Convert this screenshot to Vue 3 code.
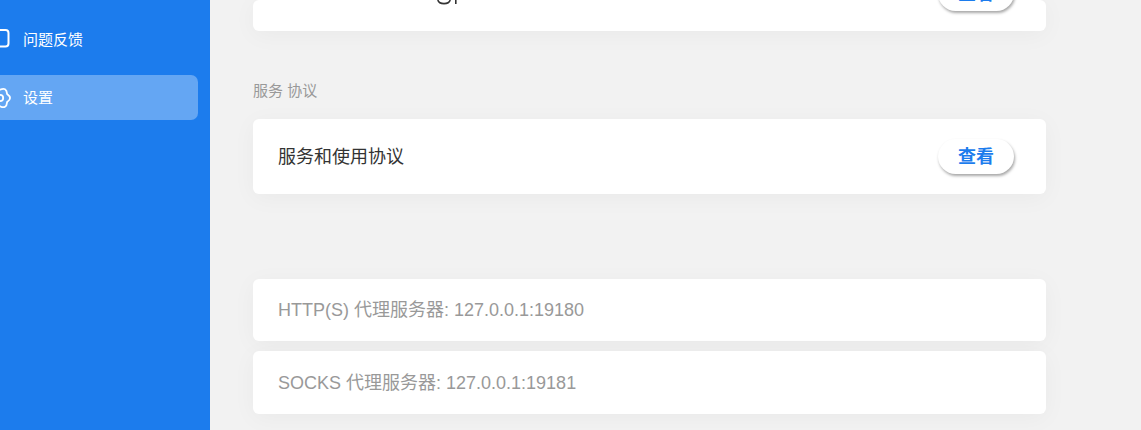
<template>
  <div class="page">
    <aside class="sidebar">
      <div class="nav-list">
        <div v-for="item in navItems" :key="item.name" class="nav-item" :class="{ active: item.active }">
          <svg v-if="item.icon === 'feedback'" class="nav-icon" viewBox="0 0 22 22" fill="none" stroke="#fff" stroke-width="2">
            <rect x="3" y="1" width="16.5" height="16.5" rx="3" />
          </svg>
          <svg v-else class="nav-icon" viewBox="0 0 22 22" fill="none" stroke="#fff" stroke-width="1.8" stroke-linejoin="round">
            <path d="M18.1 6.9Q24 11 18.1 15.1 17.5 22.3 11 19.2 4.5 22.3 3.9 15.1-2 11 3.9 6.9 4.5-.3 11 2.8 17.5-.3 18.1 6.9z" />
            <circle cx="11" cy="11" r="3.2" />
          </svg>
          <span class="nav-label">{{ item.name }}</span>
        </div>
      </div>
    </aside>

    <main class="content">
      <div class="card top-card">
        <svg class="cut-glyph" viewBox="0 0 22 6" fill="none" stroke="#333" stroke-width="1.6">
          <path d="M0.8 0C1.5 2.4 4 3.6 7 3.6S12.5 2.4 13.2 0" />
          <path d="M18.8 0V4" />
        </svg>
        <button class="view-btn"><span class="btn-text">查看</span></button>
      </div>

      <div class="section-title">服务 协议</div>
      <div class="card row-card">
        <span class="row-name">服务和使用协议</span>
        <button class="view-btn"><span class="btn-text">查看</span></button>
      </div>

      <div class="proxy-list">
        <div v-for="proxy in proxies" :key="proxy" class="card proxy-card">
          <span class="proxy-text">{{ proxy }}</span>
        </div>
      </div>
    </main>
  </div>
</template>

<script setup>
const navItems = [
  { name: '问题反馈', icon: 'feedback' },
  { name: '设置', icon: 'settings', active: true }
]

const proxies = [
  'HTTP(S) 代理服务器: 127.0.0.1:19180',
  'SOCKS 代理服务器: 127.0.0.1:19181'
]
</script>

<style>
html, body {
  margin: 0;
  overflow: hidden;
}
</style>

<style scoped>
.page {
  display: flex;
  height: 430px;
  overflow: hidden;
  background-color: #f2f2f2;
  font-family: "Liberation Sans", "Noto Sans CJK SC", sans-serif;
}

.sidebar {
  flex: 0 0 210px;
  background-color: #1c7ced;
  overflow: hidden;
}

.nav-list {
  display: flex;
  flex-direction: column;
  gap: 13px;
  margin: 17px 12px 0 -20px;
}

.nav-item {
  display: flex;
  align-items: center;
  gap: 12px;
  height: 45px;
  padding-left: 9px;
  border-radius: 7px;
  color: #fff;
  font-size: 15px;
}

.nav-item.active {
  background-color: #64a6f3;
}

.nav-label {
  padding-bottom: 2px;
}

.nav-icon {
  width: 22px;
  height: 22px;
  flex: none;
}

.content {
  flex: 1;
  height: 430px;
  padding: 0 95px 0 43px;
  overflow: hidden;
}

.card {
  background-color: #fff;
  border-radius: 6px;
  box-shadow: 0 4px 24px rgba(0, 0, 0, 0.04);
}

.top-card {
  position: relative;
  display: flex;
  align-items: flex-end;
  justify-content: flex-end;
  height: 31px;
  padding: 0 32px 20px 0;
  box-sizing: border-box;
}

.cut-glyph {
  position: absolute;
  left: 184px;
  top: 0;
  width: 22px;
  height: 6px;
}

.section-title {
  margin: 51px 0 19px;
  height: 18px;
  line-height: 18px;
  font-size: 15px;
  color: #999;
}

.row-card {
  display: flex;
  align-items: center;
  justify-content: space-between;
  height: 75px;
  padding: 0 32px 0 25px;
}

.row-name {
  padding-bottom: 4px;
  font-size: 18px;
  color: #333;
}

.view-btn {
  flex: none;
  width: 76px;
  height: 35px;
  padding: 0;
  border: none;
  border-radius: 18px;
  background-color: #fff;
  box-shadow: 1px 2px 3px rgba(0, 0, 0, 0.35);
  color: #1c7ced;
  font-family: inherit;
  font-size: 18px;
  font-weight: bold;
}

.btn-text {
  display: block;
  padding-bottom: 4px;
}

.proxy-list {
  display: flex;
  flex-direction: column;
  gap: 10px;
  margin-top: 85px;
}

.proxy-card {
  display: flex;
  align-items: center;
  height: 62.4px;
  padding-left: 25px;
  font-size: 18px;
  color: #999;
}

.proxy-text {
  padding-bottom: 4px;
}
</style>
